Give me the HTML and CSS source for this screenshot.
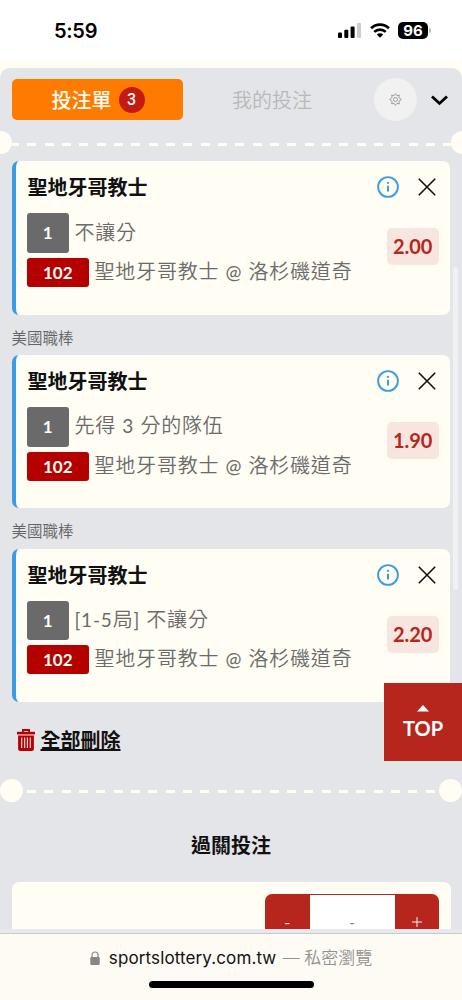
FILE: index.html
```html
<!DOCTYPE html>
<html lang="zh-Hant">
<head>
<meta charset="utf-8">
<title>投注單</title>
<link rel="stylesheet" href="styles.css">
</head>
<body>
<svg class="defs" width="0" height="0">
  <symbol id="info" viewBox="0 0 22 22"><circle cx="11" cy="11" r="9.9" fill="none" stroke="#3a9ce2" stroke-width="1.9"/><path d="M11 9.8v5.8" stroke="#3a9ce2" stroke-width="2"/><circle cx="11" cy="6.8" r="1.15" fill="#3a9ce2"/></symbol>
  <symbol id="close" viewBox="0 0 18 18"><path d="M.8.8l16.4 16.4M17.2.8L.8 17.2" stroke="#111" stroke-width="1.6"/></symbol>
</svg>
<div class="phone">
  <header class="status">
    <span class="time">5:59</span>
    <div class="status-icons">
      <svg class="signal" width="24" height="16" viewBox="0 0 24 16"><rect x="0" y="9.5" width="4" height="5.5" rx="1"/><rect x="6.3" y="6.7" width="4" height="8.3" rx="1"/><rect x="12.6" y="3.4" width="4" height="11.6" rx="1"/><rect x="19" y="0" width="4" height="15" rx="1" fill="#ccc"/></svg>
      <svg class="wifi" width="20" height="15" viewBox="0 0 20 15"><path d="M1.1 5.3a12.8 12.8 0 0 1 17.8 0M4.3 8.9a8.2 8.2 0 0 1 11.4 0" fill="none" stroke="#000" stroke-width="2.7"/><path d="M10 14.7L6.8 11.5a4.6 4.6 0 0 1 6.4 0z"/></svg>
      <span class="battery">96</span><i class="battery-tip"></i>
    </div>
  </header>
  <main class="sheet">
    <nav class="tabs">
      <div class="tab tab-active">投注單<span class="count">3</span></div>
      <div class="tab tab-idle">我的投注</div>
      <div class="gear"><svg width="13" height="13" viewBox="0 0 24 24" fill="none" stroke="#999" stroke-width="1.8"><path d="M12 1.2l2.6 3.6 4.5-.9-.9 4.5 4.6 3.6-4.6 3.6.9 4.5-4.5-.9-2.6 3.6-2.6-3.6-4.5.9.9-4.5L1.2 12l4.6-3.6-.9-4.5 4.5.9z" stroke-linejoin="round"/><circle cx="12" cy="12" r="3.7"/></svg></div>
      <svg class="chevron" width="17" height="11" viewBox="0 0 17 11"><path d="M1 1.4l7.5 7 7.5-7" fill="none" stroke="#000" stroke-width="2.8"/></svg>
    </nav>
    <div class="divider divider-edge"><i class="dot"></i><i class="dashes"></i><i class="dot"></i></div>

    <section class="bets">
      <article class="card">
        <div class="card-head"><h2>聖地牙哥教士</h2><svg class="info"><use href="#info"/></svg><svg class="close"><use href="#close"/></svg></div>
        <div class="card-body">
          <div class="lines"><div class="line"><b class="no">1</b><span>不讓分</span></div><div class="line"><b class="code">102</b><span>聖地牙哥教士 <em>@</em> 洛杉磯道奇</span></div></div>
          <div class="odds">2.00</div>
        </div>
      </article>
      <div class="league">美國職棒</div>
      <article class="card">
        <div class="card-head"><h2>聖地牙哥教士</h2><svg class="info"><use href="#info"/></svg><svg class="close"><use href="#close"/></svg></div>
        <div class="card-body">
          <div class="lines"><div class="line"><b class="no">1</b><span>先得 <em>3</em> 分的隊伍</span></div><div class="line"><b class="code">102</b><span>聖地牙哥教士 <em>@</em> 洛杉磯道奇</span></div></div>
          <div class="odds">1.90</div>
        </div>
      </article>
      <div class="league">美國職棒</div>
      <article class="card">
        <div class="card-head"><h2>聖地牙哥教士</h2><svg class="info"><use href="#info"/></svg><svg class="close"><use href="#close"/></svg></div>
        <div class="card-body">
          <div class="lines"><div class="line"><b class="no">1</b><span><em>[1-5</em>局<em>]</em> 不讓分</span></div><div class="line"><b class="code">102</b><span>聖地牙哥教士 <em>@</em> 洛杉磯道奇</span></div></div>
          <div class="odds">2.20</div>
        </div>
      </article>
    </section>

    <div class="remove">
      <svg width="18" height="22" viewBox="0 0 18 22"><path d="M5.9 4V1h6.2v3" fill="none" stroke="#b90000" stroke-width="1.8"/><path d="M0 2.8h18v2.6H0z" fill="#b90000"/><path d="M1.1 6.4h15.8V20a2 2 0 0 1-2 2H3.1a2 2 0 0 1-2-2z" fill="#b90000"/><path d="M4.7 8.6v10.4M7.6 8.6v10.4M10.4 8.6v10.4M13.3 8.6v10.4" stroke="#e9d3d5" stroke-width="1.2"/></svg>
      <a>全部刪除</a>
    </div>
    <div class="divider divider-inset"><i class="dot"></i><i class="dashes"></i><i class="dot"></i></div>
    <h3 class="parlay-title">過關投注</h3>
    <div class="parlay">
      <div class="stepper"><span class="step minus">-</span><span class="value">-</span><span class="step plus"><svg width="10" height="10" viewBox="0 0 10 10"><path d="M0 5h10M5 0v10" stroke="#eee" stroke-width="1"/></svg></span></div>
    </div>
  </main>
  <footer class="browser">
    <div class="address">
      <svg width="10" height="14" viewBox="0 0 10 14"><path d="M2 6.5V4a3 3 0 0 1 6 0v2.5" fill="none" stroke="#868686" stroke-width="1.2"/><rect x=".3" y="6" width="9.4" height="8" rx="1.3" fill="#868686"/></svg>
      <span class="domain">sportslottery.com.tw</span><span class="mode">—&nbsp;私密瀏覽</span>
    </div>
    <div class="home"></div>
  </footer>
  <i class="scrollbar"></i>
  <div class="top"><svg width="12" height="7" viewBox="0 0 12 7"><path d="M6 0l6 6.5H0z" fill="#fff"/></svg><span>TOP</span></div>
</div>
</body>
</html>
```
FILE: styles.css
```css
* { box-sizing: border-box; }
body { margin: 0; overflow: hidden; background: #fffdf4; font-family: Lato, "Noto Sans CJK TC", sans-serif; }
h2, h3 { margin: 0; }
svg { display: block; flex: none; }
.defs { position: absolute; }
.phone { position: relative; display: flex; flex-direction: column; width: 462px; height: 1000px; overflow: hidden; }

.status { display: flex; flex: none; align-items: center; justify-content: space-between; height: 61px; margin-bottom: 7px; padding: 0 31px 0 54px; background: #fff; border-radius: 0 0 7px 7px; }
.time { font: 600 20px/24px Inter, sans-serif; letter-spacing: -.3px; }
.status-icons { display: flex; align-items: center; }
.wifi { margin: 0 8px 0 8px; }
.battery { width: 30px; height: 17px; border-radius: 5px; background: #000; color: #fff; font: 700 15px/17px Inter, sans-serif; text-align: center; }
.battery-tip { width: 2px; height: 5px; margin-left: 1px; background: #bbb; border-radius: 0 2px 2px 0; }

.sheet { display: flex; flex-direction: column; flex: none; height: 861px; background: #e4e5e8; border-radius: 10px 10px 0 0; }
.tabs { display: flex; flex: none; align-items: center; height: 63px; padding: 0 13px 0 11.5px; }
.tab { display: flex; align-items: center; justify-content: center; height: 41px; font-size: 20px; }
.tab-active { width: 171px; gap: 7px; padding-left: 2px; border-radius: 5px; background: #ff7b00; color: #fffdf4; font-weight: 500; }
.count { width: 26px; height: 26px; border-radius: 50%; background: #c41a12; font: 500 16px/26px Roboto, sans-serif; text-align: center; }
.tab-idle { width: 179px; color: #b7b8ba; font-weight: 350; }
.gear { display: flex; align-items: center; justify-content: center; width: 43px; height: 43px; margin-left: 12px; border-radius: 50%; background: #f1f1f2; }
.chevron { margin-top: 2px; margin-left: auto; margin-right: 1px; }

.divider { display: flex; flex: none; align-items: center; height: 23px; }
.dot { flex: none; width: 23px; height: 23px; border-radius: 50%; background: #fffdf4; }
.dashes { flex: 1; height: 3px; background: repeating-linear-gradient(90deg, #fffdf4 0 9px, transparent 9px 17.33px); }
.divider-edge { margin: 0 -11.5px; }
.divider-edge .dashes { margin-top: 3px; background: repeating-linear-gradient(90deg, #fffdf4 0 7px, transparent 7px 15.4px, #fffdf4 15.4px 17.33px); }
.divider-inset .dashes { margin: 1px 4px 0; }

.bets { display: flex; flex: none; flex-direction: column; margin: 7.2px 11.8px 0 11.5px; }
.card { height: 153.4px; padding: 14px 11.5px 0 11px; border-left: 4.5px solid #3a9ce2; border-radius: 7px; background: #fffdf4; }
.card-head { display: flex; align-items: center; height: 24px; }
.card-head h2 { flex: 1; padding-left: 1px; color: #111; font-size: 20px; font-weight: 700; line-height: 24px; }
.info { width: 22px; height: 22px; margin-right: 19px; }
.close { width: 18px; height: 18px; margin-right: 3px; }
.card-body { display: flex; justify-content: space-between; padding-top: 14px; }
.line { display: flex; align-items: center; gap: 5.5px; color: #6b6b6b; font-size: 20px; font-weight: 350; letter-spacing: .8px; white-space: nowrap; }
.line b { display: flex; align-items: center; justify-content: center; border-radius: 3px; color: #fffdf4; font-size: 17px; letter-spacing: 0; }
.line span { margin-top: -2px; line-height: 28px; }
.line em { font-style: normal; font-weight: 400; font-size: 19px; }
.no { width: 42.5px; height: 39.5px; background: #6a6a6a; }
.code { width: 62.5px; height: 29px; background: #b50000; }
.line + .line { margin-top: 5px; }
.odds { flex: none; width: 52px; height: 37px; margin-top: 15px; border-radius: 5px; background: #f7e6df; color: #b7261c; font-size: 20px; font-weight: 700; line-height: 36px; text-align: center; }
.league { height: 40.5px; color: #626366; font-size: 15.5px; font-weight: 350; line-height: 47px; }

.remove { display: flex; flex: none; align-items: center; gap: 5.5px; height: 24px; margin: 25.7px 0 0 17px; }
.remove a { color: #111; font-size: 20px; font-weight: 700; line-height: 24px; text-decoration: underline; text-decoration-thickness: 2px; text-underline-offset: 1px; }
.divider-inset { margin-top: 27px; }
.parlay-title { flex: none; margin-top: 28px; color: #111; font-size: 20px; font-weight: 700; line-height: 30px; text-align: center; }
.parlay { display: flex; flex: 1; justify-content: flex-end; margin: 22px 11.5px 0; padding: 12px 11.5px 0; border-radius: 7px 7px 0 0; background: #fffdf4; }
.stepper { display: flex; width: 174px; padding-top: 1px; border-radius: 7px 7px 0 0; background: #b7261c; }
.stepper span { display: flex; align-items: flex-end; justify-content: center; padding-bottom: 2px; line-height: 10px; }
.step { width: 44.5px; color: #eee; font-size: 16px; }
.value { flex: 1; background: #fff; color: #888; font-size: 16px; }

.browser { display: flex; flex: none; flex-direction: column; align-items: center; height: 71px; background: linear-gradient(#e8e9ec 0 4px, #c9cacc 4px 5px, #fdfbf4 5px 100%); }
.address { display: flex; align-items: center; height: 24px; margin-top: 17px; font: 400 17px/24px Inter, "Noto Sans CJK TC", sans-serif; }
.domain { margin-left: 9px; color: #111; letter-spacing: .12px; }
.mode { margin-left: 6px; color: #929292; font-weight: 350; }
.home { width: 165px; height: 7px; margin-top: 11px; border-radius: 4px; background: #000; }

.scrollbar { position: absolute; top: 267px; left: 453px; width: 5px; height: 323px; border-radius: 3px; background: #f0f1f3; }
.top { position: absolute; top: 682.5px; right: 0; display: flex; flex-direction: column; align-items: center; width: 78px; height: 78px; padding-top: 22.5px; background: #b7261c; color: #fff; font-size: 20px; font-weight: 700; line-height: 24px; }
.top span { margin-top: 4px; }
```
